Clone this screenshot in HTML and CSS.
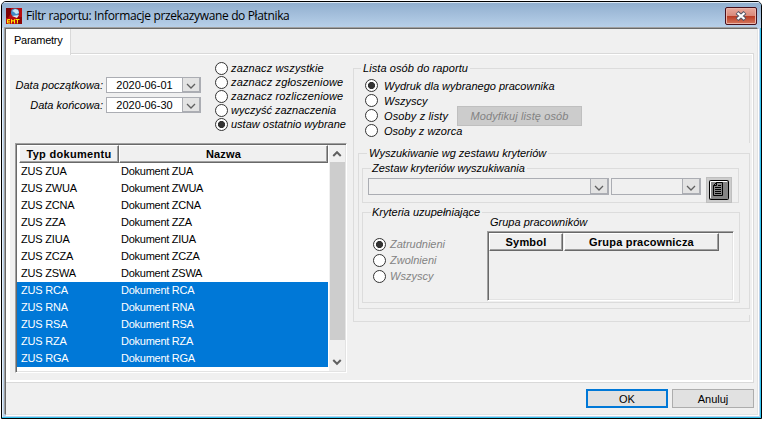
FILE: index.html
```html
<!DOCTYPE html>
<html lang="pl">
<head>
<meta charset="utf-8">
<title>Filtr raportu</title>
<link rel="stylesheet" href="styles.css">
</head>
<body>
<div class="window">
  <header class="titlebar">
    <svg class="app-icon" viewBox="0 0 16 16"><rect width="16" height="16" fill="#b80d10"/><path d="M0 0h5v5L2 10H0z" fill="#7d0508"/><path d="M11 9h5v7h-5z" fill="#8c0709"/><circle cx="9" cy="4.500" r="4" fill="#3f8bc4"/><path d="M6 3l3-2 3 1 1 3-3 1-2-2z" fill="#c9e6f5"/><path d="M6 8l7-1-2 3z" fill="#dfe8ef"/><path d="M4 11.500H1.500v3.500H4M1.500 13.200H4M5.500 15.500v-4l1.500 2 1.500-2v4M9.500 11.500h4M11.500 11.500v4" fill="none" stroke="#ffe800" stroke-width="1"/></svg>
    <span class="title">Filtr raportu: Informacje przekazywane do Płatnika</span>
    <button class="close"><svg width="12" height="10" viewBox="0 0 12 10"><path d="M2 1.500l8 7M10 1.500l-8 7" stroke="#535666" stroke-width="4.200"/><path d="M2.500 2l7 6M9.500 2l-7 6" stroke="#fff" stroke-width="2.300"/></svg></button>
  </header>
  <main class="client">
    <nav class="tabs"><span class="tab">Parametry</span></nav>
    <section class="panel">
      <div class="page">
        <div class="left">
          <div class="settings">
            <div class="dates">
              <label class="date-row"><span>Data początkowa:</span><span class="combo date"><b>2020-06-01</b><i><svg viewBox="0 0 10 6"><path d="M1 1l4 4 4-4"/></svg></i></span></label>
              <label class="date-row"><span>Data końcowa:</span><span class="combo date"><b>2020-06-30</b><i><svg viewBox="0 0 10 6"><path d="M1 1l4 4 4-4"/></svg></i></span></label>
            </div>
            <div class="radios mark">
              <label class="radio"><i></i><span class="loose">zaznacz wszystkie</span></label>
              <label class="radio"><i></i><span class="loose">zaznacz zgłoszeniowe</span></label>
              <label class="radio"><i></i><span class="loose">zaznacz rozliczeniowe</span></label>
              <label class="radio"><i></i><span>wyczyść zaznaczenia</span></label>
              <label class="radio on"><i></i><span>ustaw ostatnio wybrane</span></label>
            </div>
          </div>
          <div class="list">
            <div class="rows">
              <div class="head"><span>Typ dokumentu</span><span>Nazwa</span></div>
              <div class="row"><span>ZUS ZUA</span><span>Dokument ZUA</span></div>
              <div class="row"><span>ZUS ZWUA</span><span>Dokument ZWUA</span></div>
              <div class="row"><span>ZUS ZCNA</span><span>Dokument ZCNA</span></div>
              <div class="row"><span>ZUS ZZA</span><span>Dokument ZZA</span></div>
              <div class="row"><span>ZUS ZIUA</span><span>Dokument ZIUA</span></div>
              <div class="row"><span>ZUS ZCZA</span><span>Dokument ZCZA</span></div>
              <div class="row"><span>ZUS ZSWA</span><span>Dokument ZSWA</span></div>
              <div class="row sel"><span>ZUS RCA</span><span>Dokument RCA</span></div>
              <div class="row sel"><span>ZUS RNA</span><span>Dokument RNA</span></div>
              <div class="row sel"><span>ZUS RSA</span><span>Dokument RSA</span></div>
              <div class="row sel"><span>ZUS RZA</span><span>Dokument RZA</span></div>
              <div class="row sel"><span>ZUS RGA</span><span>Dokument RGA</span></div>
            </div>
            <div class="scroll">
              <svg viewBox="0 0 8 6"><path d="M1 5l3-3 3 3"/></svg>
              <div class="thumb"></div>
              <svg viewBox="0 0 8 6"><path d="M1 1l3 3 3-3"/></svg>
            </div>
          </div>
        </div>
        <div class="group people">
          <span class="legend">Lista osób do raportu</span>
          <div class="radios who">
            <label class="radio on"><i></i><span>Wydruk dla wybranego pracownika</span></label>
            <label class="radio"><i></i><span>Wszyscy</span></label>
            <div class="with-button"><label class="radio"><i></i><span class="loose">Osoby z listy</span></label><button class="modify" disabled>Modyfikuj listę osób</button></div>
            <label class="radio"><i></i><span>Osoby z wzorca</span></label>
          </div>
          <div class="search">
            <div class="group criteria">
              <span class="legend">Wyszukiwanie wg zestawu kryteriów</span>
              <div class="group preset">
                <span class="legend">Zestaw kryteriów wyszukiwania</span>
                <div class="combos">
                  <span class="combo wide"><b></b><i><svg viewBox="0 0 10 6"><path d="M1 1l4 4 4-4"/></svg></i></span>
                  <span class="combo short"><b></b><i><svg viewBox="0 0 10 6"><path d="M1 1l4 4 4-4"/></svg></i></span>
                  <button class="doc"><svg width="20" height="20" viewBox="0 0 20 20"><rect x=".5" y=".5" width="19" height="19" rx="1" fill="#858585" stroke="#000"/><path d="M1.500 18V1.500H18" fill="none" stroke="#fff"/><path d="M7.500 2.500h6v13h-9v-10zM7.500 2.500v3h-3M9 5.500h3M6 7.500h6M6 9.500h6M6 11.500h6M6 13.500h6" fill="none" stroke="#000"/></svg></button>
                </div>
              </div>
              <div class="group extra">
                <span class="legend">Kryteria uzupełniające</span>
                <div class="extra-body">
                  <div class="radios status">
                    <label class="radio on"><i></i><span>Zatrudnieni</span></label>
                    <label class="radio"><i></i><span>Zwolnieni</span></label>
                    <label class="radio"><i></i><span>Wszyscy</span></label>
                  </div>
                  <div class="staff">
                    <span class="caption">Grupa pracowników</span>
                    <div class="staff-grid"><span>Symbol</span><span>Grupa pracownicza</span></div>
                  </div>
                </div>
              </div>
            </div>
          </div>
        </div>
      </div>
    </section>
    <footer class="actions"><button class="ok">OK</button><button>Anuluj</button></footer>
  </main>
</div>
</body>
</html>
```
FILE: styles.css
```css
* { box-sizing: border-box; }
body { margin: 0; width: 763px; height: 421px; overflow: hidden; background: #fff; color: #000; font: 11px/14px "Liberation Sans", Arial, sans-serif; white-space: nowrap; }
button { padding: 0; font: inherit; }
b, i { font-style: normal; font-weight: normal; }
svg { display: block; }

.window { width: 761px; height: 418px; margin: 1px 0 0 1px; border: 1px solid #000; border-radius: 5px 5px 0 0; overflow: hidden; background: #b9d1ea; box-shadow: inset -1px -1px 0 #32c4f0, inset 1px 0 0 #e4eef8; }
.titlebar { display: flex; align-items: center; height: 26px; padding: 0 4px 0 5px; background: linear-gradient(#91afcf, #b9d1ea); border-top: 1px solid #dce8f4; }
.app-icon { width: 16px; height: 16px; margin-left: -1px; }
.title { margin-left: 4px; flex: 1; font: 12px/16px "Open Sans", sans-serif; letter-spacing: -.36px; }
.close { width: 32px; height: 18px; display: flex; align-items: center; justify-content: center; border: 1px solid #48101c; border-radius: 2px; background: linear-gradient(#e9a99c, #d98a7b 47%, #b93a22 50%, #d5775e); box-shadow: inset 0 0 0 1px #eab5aa; }

.client { width: 753px; height: 387px; margin-left: 3px; background: #f0f0f0; border: 1px solid; border-color: #696969 #e3e3e3 #e3e3e3 #696969; box-shadow: 1px 1px 0 #fff, -1px -1px 0 #a0a0a0; }
.tabs { display: flex; height: 24px; }
.tab { position: relative; width: 65px; height: 26px; padding: 4px 0 0 8px; background: #fff; border-right: 1px solid #d9d9d9; letter-spacing: -.25px; }
.panel { width: 748px; height: 330px; padding: 1px 1px 2px 4px; background: #fff; border: solid #d9d9d9; border-width: 1px 1px 1px 0; }
.page { display: flex; height: 325px; background: #f0f0f0; }
.left { width: 343px; padding-left: 5px; }
.settings { display: flex; height: 88px; font-style: italic; }
.dates { display: flex; flex-direction: column; gap: 4px; width: 200px; padding-top: 22px; }
.date-row { display: flex; justify-content: flex-end; align-items: center; gap: 3px; height: 16px; margin-right: 14px; }

.combo { display: flex; height: 17px; border: 1px solid #abadb3; font-style: normal; }
.combo b { flex: 1; }
.combo i { width: 18px; display: flex; align-items: center; justify-content: center; background: #e3e3e3; border: 1px solid #abadb3; border-width: 0 1px 1px 1px; }
.combo svg { width: 10px; height: 6px; margin-top: 3px; }
.combo path, .scroll path { fill: none; stroke: #606060; stroke-width: 1.3; }
.date { width: 95px; height: 16px; background: #fff; }
.date b { text-align: center; }

.radios { display: flex; flex-direction: column; }
.radio { display: flex; align-items: center; }
.radio i { width: 13px; height: 13px; flex: none; border: 1px solid #333; border-radius: 50%; background: #fff; }
.radio.on i { background: radial-gradient(circle, #333 3.2px, #fff 3.9px); }
.mark { padding-top: 6px; }
.mark .radio { height: 14px; gap: 3px; }
.loose { letter-spacing: .14px; }

.list { display: flex; width: 332px; height: 230px; background: #fff; border: 1px solid; border-color: #a0a0a0 #fff #fff #a0a0a0; box-shadow: inset 1px 1px 0 #696969, inset -1px -1px 0 #e3e3e3; padding: 1px; }
.rows { width: 311px; }
.head { display: flex; height: 18px; padding-left: 2px; font-weight: bold; text-align: center; }
.head span, .staff-grid span { background: #f0f0f0; border: 1px solid; border-color: #fff #696969 #696969 #fff; box-shadow: inset -1px -1px 0 #a0a0a0; line-height: 17px; letter-spacing: .2px; }
.head span:first-child { width: 100px; letter-spacing: .3px; }
.head span:last-child { flex: 1; }
.row { display: flex; height: 17px; padding-left: 4px; line-height: 17px; }
.row span { letter-spacing: -.26px; }
.row span:first-child { width: 100px; letter-spacing: -.2px; }
.sel { background: #0078d7; color: #fff; }
.scroll { width: 16px; margin-left: 1px; display: flex; flex-direction: column; align-items: center; background: #f0f0f0; }
.scroll svg { width: 10px; height: 17px; flex: none; }
.scroll path { stroke-width: 1.6; }
.thumb { width: 15px; height: 178px; background: #cdcdcd; margin-bottom: 14px; }

.group { display: flex; flex-direction: column; border: 1px solid #dcdcdc; }
.legend { align-self: flex-start; height: 14px; margin-top: -8px; background: #f0f0f0; }
.people { width: 397px; height: 254px; margin-top: 13px; font-style: italic; }
.people > .legend { margin-left: 7px; padding: 0 2px; letter-spacing: .08px; }
.who { margin-top: 3px; padding-left: 11px; }
.who .radio { height: 15px; gap: 6px; }
.with-button { display: flex; height: 15px; }
.with-button .radio { width: 92px; }
.modify { width: 125px; height: 20px; margin-top: -2px; border: 1px solid #bfbfbf; background: #ccc; color: #838383; font-style: italic; letter-spacing: .1px; }
.search { height: 172px; margin: 5px -1px 0 0; padding: 10px 0 0 4px; background: #f0f0f0; }
.criteria { width: 392px; height: 156px; }
.criteria > .legend { margin-left: 8px; padding: 0 2px; }
.preset { width: 377px; height: 35px; margin: 8px 0 0 3px; }
.preset > .legend, .extra > .legend { margin-left: 8px; padding: 0 2px 0 1px; }
.combos { display: flex; margin-top: 3px; padding-left: 5px; }
.wide { width: 241px; }
.short { width: 90px; margin: 0 5px 0 2px; }
.doc { width: 26px; height: 26px; margin-top: -1px; padding: 0; display: flex; align-items: center; justify-content: center; flex: none; position: relative; border: 1px solid #bfbfbf; background: #ccc; }
.extra { width: 378px; height: 91px; margin: 9px 0 0 3px; }
.extra-body { display: flex; margin-top: -4px; }
.status { width: 124px; padding: 21px 0 0 10px; color: #838383; }
.status .radio { height: 16px; gap: 4px; }
.staff { display: flex; flex-direction: column; gap: 2px; }
.caption { padding-left: 3px; }
.staff-grid { display: flex; gap: 1px; width: 247px; height: 70px; padding: 1px; border: 1px solid; border-color: #a0a0a0 #fff #fff #a0a0a0; box-shadow: inset 1px 1px 0 #696969, inset -1px -1px 0 #e3e3e3; font-style: normal; font-weight: bold; text-align: center; }
.staff-grid span { width: 74px; height: 18px; }
.staff-grid span:last-child { width: 155px; }

.actions { display: flex; justify-content: flex-end; gap: 4px; margin: 6px 3px 0 0; }
.actions button { width: 82px; height: 19px; border: 1px solid #adadad; background: #e1e1e1; }
.actions .ok { border: 2px solid #0078d7; }
```
